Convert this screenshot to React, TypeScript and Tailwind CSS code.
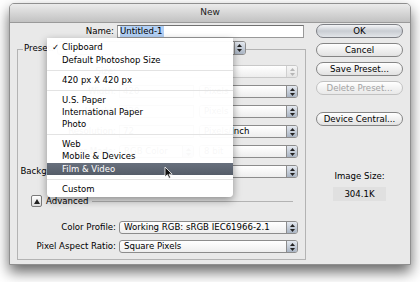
import React from "react";

function Arrows({ disabled }: { disabled?: boolean }) {
  return (
    <svg width="5" height="8" viewBox="0 0 5 8">
      <path d="M2.5 0L5 3H0z" fill={disabled ? "#b5b5b5" : "#222"} />
      <path d="M2.5 8L5 5H0z" fill={disabled ? "#b5b5b5" : "#222"} />
    </svg>
  );
}

function Select({
  text,
  disabled,
  className,
}: {
  text: string;
  disabled?: boolean;
  className: string;
}) {
  return (
    <div
      className={`flex h-[13px] items-stretch rounded-[3px] border bg-linear-to-b from-white to-[#eeeeee] ${
        disabled ? "border-[#c8c8c8] text-[#a0a0a0]" : "border-[#8c8c8c] text-black"
      } ${className}`}
    >
      <span className="flex-1 overflow-hidden whitespace-nowrap pl-[4px] text-[8.6px] leading-[11px]">
        {text}
      </span>
      <span
        className={`flex w-[11px] items-center justify-center rounded-r-[2px] border-l ${
          disabled
            ? "border-[#d0d0d0] bg-linear-to-b from-[#f6f6f6] to-[#e4e4e4]"
            : "border-[#8c8c8c] bg-linear-to-b from-[#e4e9f0] to-[#a9b4c3]"
        }`}
      >
        <Arrows disabled={disabled} />
      </span>
    </div>
  );
}

function Field({ text, className }: { text: string; className: string }) {
  return (
    <div
      className={`h-[13px] border border-[#9a9a9a] border-t-[#777] bg-white pl-[3px] text-[8.6px] leading-[11px] ${className}`}
    >
      {text}
    </div>
  );
}

function Button({
  label,
  primary,
  disabled,
}: {
  label: string;
  primary?: boolean;
  disabled?: boolean;
}) {
  return (
    <div
      className={`flex h-[14px] items-center justify-center rounded-full border text-[8.6px] ${
        primary
          ? "border-[#7d7f84] bg-linear-to-b from-[#f4f5f7] via-[#c9cdd3] to-[#e2e5e9] text-black"
          : disabled
          ? "border-[#c2c2c2] bg-linear-to-b from-white via-[#f3f3f3] to-[#e9e9e9] text-[#a3a3a3]"
          : "border-[#858585] bg-linear-to-b from-white via-[#f0f0f0] to-[#e2e2e2] text-black"
      }`}
    >
      {label}
    </div>
  );
}

function Row({ label, children, className }: { label: string; children: React.ReactNode; className: string }) {
  return (
    <div className={`flex h-[13px] items-center ${className}`}>
      <div className="w-[98px] whitespace-nowrap text-right text-[8.6px]">{label}</div>
      <div className="ml-[3px] flex w-[179px] gap-[5px]">{children}</div>
    </div>
  );
}

const menu: (string | null)[] = [
  "Clipboard",
  "Default Photoshop Size",
  null,
  "420 px X 420 px",
  null,
  "U.S. Paper",
  "International Paper",
  "Photo",
  null,
  "Web",
  "Mobile & Devices",
  "Film & Video",
  null,
  "Custom",
];

export default function App() {
  return (
    <div className="relative h-[282px] w-[420px] overflow-hidden bg-white font-['DejaVu_Sans',sans-serif] text-black">
      <div className="ml-[9px] mt-[3px] flex h-[262px] w-[402px] flex-col overflow-hidden rounded-t-[5px] border border-[#8f8f8f] bg-[#e9e9e9] shadow-[0_7px_14px_rgba(0,0,0,0.6)]">
        <div className="flex h-[19px] shrink-0 items-center justify-center border-b border-[#9a9a9a] bg-linear-to-b from-[#ebebeb] to-[#c2c2c2] text-[9px] text-[#1c1c1c]">
          New
        </div>
        <div className="flex">
          <div className="ml-[7px] w-[289px]">
            <div className="mt-[2px] flex h-[13px] items-center">
              <div className="w-[100px] pr-[3px] text-right text-[8.6px]">Name:</div>
              <div className="flex h-[13px] w-[187px] items-center border border-[#999] border-t-[#707070] bg-white pl-[2px] text-[8.6px]">
                <span className="bg-[#b3d1f6] pr-[1px] leading-[11px]">Untitled-1</span>
              </div>
            </div>
            <div className="mt-[11px] h-[211px] border border-[#b3b3b3]">
              <div className="-mt-[9px] flex h-[14px] items-center">
                <div className="ml-[5px] bg-[#e9e9e9] px-[1px] text-[8.6px]">Preset:</div>
                <Select text="Clipboard" className="ml-[2px] h-[14px] w-[189px]" />
              </div>
              <Row label="Size:" className="mt-[10px]">
                <Select text="" disabled className="w-[179px]" />
              </Row>
              <Row label="Width:" className="mt-[7px]">
                <Field text="420" className="w-[75px]" />
                <Select text="Pixels" className="w-[99px]" />
              </Row>
              <Row label="Height:" className="mt-[7px]">
                <Field text="420" className="w-[75px]" />
                <Select text="Pixels" className="w-[99px]" />
              </Row>
              <Row label="Resolution:" className="mt-[7px]">
                <Field text="72" className="w-[75px]" />
                <Select text="Pixels/Inch" className="w-[99px]" />
              </Row>
              <Row label="Color Mode:" className="mt-[7px]">
                <Select text="RGB Color" className="w-[75px]" />
                <Select text="8 bit" className="w-[99px]" />
              </Row>
              <Row label="Background Contents:" className="mt-[7px]">
                <Select text="White" className="w-[179px]" />
              </Row>
              <div className="mt-[17px] flex h-[12px] items-center">
                <div className="ml-[13px] flex h-[12px] w-[11px] items-center justify-center rounded-[2px] border border-[#7a7a7a] bg-linear-to-b from-white to-[#dcdcdc]">
                  <svg width="6" height="5" viewBox="0 0 6 5">
                    <path d="M3 0L6 5H0z" fill="#222" />
                  </svg>
                </div>
                <div className="ml-[4px] text-[8.6px]">Advanced</div>
                <div className="ml-[4px] mr-[12px] h-px flex-1 bg-[#b3b3b3]" />
              </div>
              <Row label="Color Profile:" className="mt-[14px]">
                <Select text="Working RGB:  sRGB IEC61966-2.1" className="w-[179px]" />
              </Row>
              <Row label="Pixel Aspect Ratio:" className="mt-[6px]">
                <Select text="Square Pixels" className="w-[179px]" />
              </Row>
            </div>
          </div>
          <div className="ml-[10px] mt-[1px] flex w-[87px] flex-col">
            <Button label="OK" primary />
            <div className="mt-[5px]">
              <Button label="Cancel" />
            </div>
            <div className="mt-[5px]">
              <Button label="Save Preset..." />
            </div>
            <div className="mt-[5px]">
              <Button label="Delete Preset..." disabled />
            </div>
            <div className="mt-[17px]">
              <Button label="Device Central..." />
            </div>
            <div className="mt-[45px] text-center text-[8.6px] leading-[11px]">Image Size:</div>
            <div className="mx-auto mt-[5px] flex h-[14px] w-[53px] items-center justify-center bg-[#e0e0e0] text-[8.6px]">
              304.1K
            </div>
          </div>
        </div>
      </div>

      <div className="absolute left-[47px] top-[38px] w-[186px] rounded-b-[4px] bg-white/[0.97] pb-[2px] pt-[3.7px] text-[8.5px] shadow-[0_3px_9px_rgba(0,0,0,0.4)]">
        {menu.map((m, i) =>
          m === null ? (
            <div key={i} className="flex h-[7.75px] items-center">
              <div className="h-px w-full bg-[#e3e3e3]" />
            </div>
          ) : (
            <div
              key={i}
              className={`relative flex h-[12.25px] items-center pl-[15px] ${
                m === "Film & Video" ? "bg-linear-to-b from-[#68707d] to-[#555d69] text-white" : ""
              }`}
            >
              {m === "Clipboard" && <span className="absolute left-[5px]">✓</span>}
              {m}
            </div>
          )
        )}
      </div>

      <svg className="absolute left-[164px] top-[166px]" width="9" height="13" viewBox="0 0 9 13">
        <path d="M1 1V11L3.4 8.7L5 12.3L6.6 11.6L5 8.2H8.2Z" fill="#111" stroke="#fff" strokeWidth="0.8" />
      </svg>
    </div>
  );
}
